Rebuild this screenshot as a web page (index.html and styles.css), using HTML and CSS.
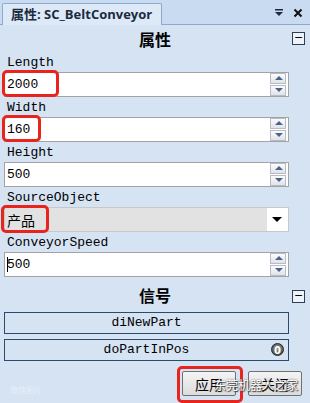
FILE: index.html
```html
<!DOCTYPE html>
<html lang="zh">
<head>
  <meta charset="UTF-8" />
  <title>属性: SC_BeltConveyor</title>
  <link rel="stylesheet" href="styles.css">
</head>
<body>

<div class="tabbar">
  <div class="tab">属性: SC_BeltConveyor</div>
  <div class="tab-tools">
    <svg width="10" height="10" viewBox="0 0 10 10"><rect x="1" y="1" width="8" height="1.5" fill="#1e2a3a"/><path d="M1 4 L9 4 L5 8 Z" fill="#1e2a3a"/></svg>
    <svg width="10" height="10" viewBox="0 0 10 10"><path d="M1.5 1.5 L8.5 8.5 M8.5 1.5 L1.5 8.5" stroke="#111" stroke-width="2"/></svg>
  </div>
</div>

<div class="panel">
  <div class="section-head">
    <span class="section-title">属性</span>
    <span class="collapse">−</span>
  </div>

  <div class="field">
    <div class="label">Length</div>
    <div class="input">
      <span class="value">2000</span>
      <div class="spin"><span class="up"></span><span class="down"></span></div>
      <div class="mark mark-length"></div>
    </div>
  </div>

  <div class="field">
    <div class="label">Width</div>
    <div class="input">
      <span class="value">160</span>
      <div class="spin"><span class="up"></span><span class="down"></span></div>
      <div class="mark mark-width"></div>
    </div>
  </div>

  <div class="field">
    <div class="label">Height</div>
    <div class="input">
      <span class="value">500</span>
      <div class="spin"><span class="up"></span><span class="down"></span></div>
    </div>
  </div>

  <div class="field">
    <div class="label">SourceObject</div>
    <div class="input select">
      <span class="value cjk">产品</span>
      <span class="arrow"></span>
      <div class="mark mark-source"></div>
    </div>
  </div>

  <div class="field">
    <div class="label">ConveyorSpeed</div>
    <div class="input">
      <span class="value"><span class="caret"></span>500</span>
      <div class="spin"><span class="up"></span><span class="down"></span></div>
    </div>
  </div>

  <div class="section-head signal-head">
    <span class="section-title">信号</span>
    <span class="collapse">−</span>
  </div>

  <div class="signal">diNewPart</div>
  <div class="signal">doPartInPos<span class="badge">0</span></div>

  <div class="footer">
    <span class="wm-left">微信图片</span>
    <button class="btn btn-apply">应用<span class="mark mark-apply"></span></button>
    <button class="btn">关闭</button>
    <span class="wm-right">东莞机器人之家</span>
  </div>
</div>

</body>
</html>
```

FILE: styles.css
```css
body {
  margin: 0;
  width: 310px;
  height: 403px;
  overflow: hidden;
  background: #d5e3f3;
  font-family: "Liberation Mono", "Noto Sans CJK SC", monospace;
}
.tabbar {
  height: 24px;
  background: #c9dbf0;
  border-bottom: 1px solid #8ea9cb;
  display: flex;
  align-items: flex-end;
  justify-content: space-between;
}
.tab {
  margin-left: 2px;
  height: 21px;
  padding: 0 9px 0 8px;
  background: #dde9f6;
  border: 1px solid #8ea9cb;
  border-bottom: none;
  border-radius: 2px 2px 0 0;
  font-family: "Open Sans", "Noto Sans CJK SC", sans-serif;
  font-weight: bold;
  font-size: 13px;
  line-height: 21px;
  color: #1b2b40;
  position: relative;
  top: 1px;
}
.tab-tools {
  display: flex;
  gap: 9px;
  padding: 0 7px 6px 0;
}
.panel {
  padding: 0 4px;
}
.section-head {
  height: 27px;
  display: flex;
  align-items: center;
  justify-content: center;
  position: relative;
}
.section-title {
  font-family: "Noto Sans CJK SC", sans-serif;
  font-weight: bold;
  font-size: 16px;
  color: #000;
}
.collapse {
  position: absolute;
  right: 1px;
  top: 7px;
  width: 11px;
  height: 11px;
  border: 1px solid #2b3f58;
  background: #eef3f9;
  font-size: 11px;
  line-height: 10px;
  text-align: center;
  color: #000;
  font-family: "DejaVu Sans", sans-serif;
}
.field .label {
  height: 19px;
  line-height: 19px;
  padding-left: 3px;
  font-size: 13px;
  color: #000;
  margin-top: 1px;
}
.input {
  position: relative;
  width: 283px;
  height: 23px;
  border: 1px solid #a3a3a3;
  background: #fff;
  display: flex;
  align-items: center;
}
.value {
  padding-left: 2px;
  font-size: 13px;
  color: #000;
  flex: 1;
  display: flex;
  align-items: center;
}
.value.cjk {
  font-family: "Noto Sans CJK SC", sans-serif;
  font-size: 14px;
}
.caret {
  width: 1px;
  height: 15px;
  background: #000;
  margin-right: -1px;
}
.spin {
  width: 16px;
  margin-right: 2px;
  display: flex;
  flex-direction: column;
  gap: 1px;
}
.spin span {
  height: 9px;
  border: 1px solid #b8bcc4;
  background: linear-gradient(#fbfbfb, #dfe3e9);
  position: relative;
}
.spin span::after {
  content: "";
  position: absolute;
  left: 4px;
  top: 2px;
  border-left: 4px solid transparent;
  border-right: 4px solid transparent;
}
.spin .up::after {
  border-bottom: 4px solid #4e5f8c;
}
.spin .down::after {
  border-top: 4px solid #4e5f8c;
}
.select {
  background: linear-gradient(to right, #e2e2e2 0, #e2e2e2 262px, #fff 262px);
  border-color: #c8c8c8;
}
.arrow {
  margin-right: 6px;
  border-left: 5px solid transparent;
  border-right: 5px solid transparent;
  border-top: 5px solid #000;
}
.mark {
  position: absolute;
  border: 3px solid #e8241c;
  border-radius: 5px;
  pointer-events: none;
}
.mark-length {
  left: -3px;
  top: -3px;
  width: 51px;
  height: 21px;
}
.mark-width {
  left: -3px;
  top: -3px;
  width: 33px;
  height: 21px;
}
.mark-source {
  left: -4px;
  top: -3px;
  width: 42px;
  height: 22px;
}
.signal-head {
  height: 34px;
  margin-top: 1px;
}
.signal-head .collapse {
  top: 12px;
}
.signal {
  position: relative;
  width: 283px;
  height: 20px;
  border: 1px solid #2b4a6e;
  text-align: center;
  font-size: 13px;
  line-height: 20px;
  color: #000;
  margin-bottom: 5px;
}
.badge {
  position: absolute;
  right: 4px;
  top: 3px;
  width: 13px;
  height: 13px;
  border-radius: 50%;
  background: radial-gradient(circle at 50% 40%, #9a9a9a, #3a3a3a);
  border: 1px solid #222;
  color: #fff;
  font-family: "DejaVu Sans", sans-serif;
  font-weight: bold;
  font-size: 10px;
  line-height: 13px;
  text-align: center;
  box-sizing: border-box;
}
.footer {
  position: relative;
  display: flex;
  justify-content: flex-end;
  align-items: center;
  gap: 12px;
  height: 35px;
  padding-right: 4px;
  margin-top: 4px;
}
.btn {
  position: relative;
  height: 25px;
  width: 54px;
  border: 1px solid #707070;
  border-radius: 2px;
  background: linear-gradient(#f4f4f4, #dcdcdc);
  font-family: "Noto Sans CJK SC", sans-serif;
  font-size: 14px;
  color: #000;
  padding: 0;
}
.mark-apply {
  left: -6px;
  top: -6px;
  width: 60px;
  height: 31px;
}
.wm-left {
  position: absolute;
  left: 6px;
  bottom: 6px;
  font-family: "Noto Sans CJK SC", sans-serif;
  font-size: 8px;
  color: #eef3f9;
  opacity: 0.8;
}
.wm-right {
  position: absolute;
  right: 8px;
  top: 10px;
  font-family: "Noto Sans CJK SC", sans-serif;
  font-size: 12px;
  color: #fff;
  text-shadow: 0 0 2px #555, 1px 1px 1px #333;
}
```
